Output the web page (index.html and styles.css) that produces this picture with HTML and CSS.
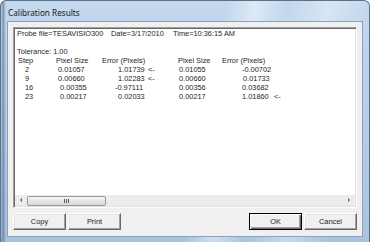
FILE: index.html
```html
<!DOCTYPE html>
<html>
<head>
<meta charset="utf-8">
<link rel="stylesheet" href="styles.css">
</head>
<body>
<div class="window">
  <div class="titlebar"><span class="title">Calibration Results</span></div>
  <div class="client">
    <div class="textbox">
      <div class="content">
        <div class="line1">
          <span>Probe file=TESAVISIO300</span>
          <span>Date=3/17/2010</span>
          <span>Time=10:36:15 AM</span>
        </div>
        <div class="blank"></div>
        <div class="row">Tolerance: 1.00</div>
        <div class="grid">
          <span class="h1">Step</span><span>Pixel Size</span><span>Error (Pixels)</span><span></span><span>Pixel Size</span><span>Error (Pixels)</span><span></span>

          <span class="n">2</span><span class="p2">0.01057</span><span class="e16">1.01739</span><span>&lt;-</span><span class="p1">0.01055</span><span class="e20">-0.00702</span><span></span>

          <span class="n">9</span><span class="p2">0.00660</span><span class="e16">1.02283</span><span>&lt;-</span><span class="p1">0.00660</span><span class="e21">0.01733</span><span></span>

          <span class="n">16</span><span class="p4">0.00355</span><span class="e13">-0.97111</span><span></span><span class="p1">0.00356</span><span class="e20">0.03682</span><span></span>

          <span class="n">23</span><span class="p4">0.00217</span><span class="e16">0.02033</span><span></span><span class="p1">0.00217</span><span class="e20">1.01860</span><span>&lt;-</span>
        </div>
      </div>
      <div class="hscroll">
        <div class="arrow left"></div>
        <div class="track">
          <div class="thumb"><span class="grip"></span><span class="grip"></span><span class="grip"></span></div>
        </div>
        <div class="arrow right"></div>
      </div>
    </div>
    <div class="buttons">
      <div class="group">
        <div class="btn">Copy</div>
        <div class="btn">Print</div>
      </div>
      <div class="group">
        <div class="btn default">OK</div>
        <div class="btn">Cancel</div>
      </div>
    </div>
  </div>
</div>
</body>
</html>
```

FILE: styles.css
```css
html, body {
  margin: 0;
  padding: 0;
  width: 370px;
  height: 242px;
  overflow: hidden;
  background: #ffffff;
}

.window {
  box-sizing: border-box;
  width: 370px;
  height: 242px;
  border: 1px solid #5d7088;
  border-bottom: none;
  border-radius: 6px 6px 0 0;
  background:
    linear-gradient(90deg, rgba(60,90,130,0) 0px, rgba(60,90,130,0.55) 2px, rgba(60,90,130,0) 5px, rgba(60,90,130,0) 100%),
    linear-gradient(100deg, rgba(255,255,255,0) 55%, rgba(255,255,255,0.45) 62%, rgba(255,255,255,0) 70%, rgba(255,255,255,0.35) 80%, rgba(255,255,255,0) 90%),
    linear-gradient(180deg, #c4d8ee 0%, #b6cde6 50%, #a9c3e0 100%);
  display: flex;
  flex-direction: column;
  padding: 0 6px 5px 6px;
  font-family: "Liberation Sans", Arial, sans-serif;
}

.titlebar {
  height: 20px;
  display: flex;
  align-items: center;
  padding-left: 1px;
  flex: none;
}

.title {
  font-family: "Noto Sans", "Liberation Sans", sans-serif;
  font-size: 8.2px;
  color: #1a1a1a;
  padding-top: 2px;
}

.client {
  flex: 1;
  background: #f0f0f0;
  border: 1px solid #8da2ba;
  display: flex;
  flex-direction: column;
  padding: 5px 5px 5px 5px;
  min-height: 0;
}

.textbox {
  box-sizing: border-box;
  height: 181px;
  background: #ffffff;
  border-style: solid;
  border-width: 1px;
  border-color: #a0a0a0 #ffffff #ffffff #a0a0a0;
  box-shadow: inset 1px 1px 0 #696969, inset -1px -1px 0 #e3e3e3;
  padding: 1px;
  display: flex;
  flex-direction: column;
}

.content {
  flex: 1;
  font-size: 7.4px;
  line-height: 9px;
  color: #1e1e1e;
  padding-left: 2px;
  white-space: nowrap;
}

.line1 {
  display: grid;
  grid-template-columns: 94px 62px auto;
  height: 9px;
}

.blank { height: 9px; }
.row { height: 9px; }

.grid {
  display: grid;
  grid-template-columns: 39px 46px 46px 30px 44px 52px auto;
  grid-auto-rows: 9px;
}

.h1 { padding-left: 1px; }
.n { padding-left: 8px; }
.p1 { padding-left: 1px; }
.p2 { padding-left: 2px; }
.p4 { padding-left: 4px; }
.e13 { padding-left: 13px; }
.e16 { padding-left: 16px; }
.e20 { padding-left: 20px; }
.e21 { padding-left: 21px; }

.hscroll {
  height: 11px;
  display: flex;
  align-items: center;
  background: #ececec;
}

.arrow {
  width: 12px;
  height: 11px;
  position: relative;
  flex: none;
}
.arrow.left::before,
.arrow.right::before {
  content: "";
  position: absolute;
  top: 3px;
  width: 0;
  height: 0;
  border-top: 2.5px solid transparent;
  border-bottom: 2.5px solid transparent;
}
.arrow.left::before {
  left: 5px;
  border-right: 2.5px solid #606060;
}
.arrow.right::before {
  left: 5px;
  border-left: 2.5px solid #606060;
}

.track {
  flex: 1;
  height: 11px;
  display: flex;
  align-items: center;
}

.thumb {
  box-sizing: border-box;
  width: 79px;
  height: 10px;
  border: 1px solid #9b9b9b;
  border-radius: 2px;
  background: linear-gradient(180deg, #f5f5f5 0%, #e6e6e6 50%, #d9d9d9 100%);
  display: flex;
  justify-content: center;
  align-items: center;
  gap: 1px;
}

.grip {
  width: 1px;
  height: 4px;
  background: #5a5a5a;
}

.buttons {
  display: flex;
  justify-content: space-between;
  margin-top: 5px;
}

.group {
  display: flex;
  gap: 2px;
}

.btn {
  box-sizing: border-box;
  width: 53px;
  height: 17px;
  background: #f0f0f0;
  border-style: solid;
  border-width: 1px;
  border-color: #ffffff #696969 #696969 #ffffff;
  box-shadow: inset -1px -1px 0 #a0a0a0, inset 1px 1px 0 #e3e3e3;
  font-size: 7.4px;
  color: #1e1e1e;
  display: flex;
  align-items: center;
  justify-content: center;
}

.btn.default {
  border: 1px solid #000000;
  box-shadow: inset 1px 1px 0 #ffffff, inset -1px -1px 0 #696969, inset -2px -2px 0 #a0a0a0;
}
```
